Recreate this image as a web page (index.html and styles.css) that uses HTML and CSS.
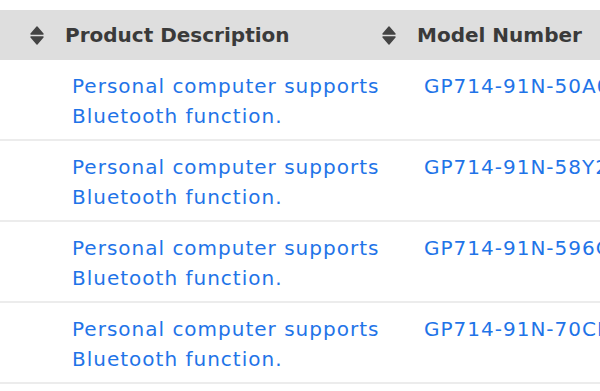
FILE: index.html
```html
<!DOCTYPE html>
<html lang="en">
<head>
<meta charset="utf-8">
<title>Products</title>
<link rel="stylesheet" href="styles.css">
</head>
<body>
<div class="table">
  <div class="head">
    <div class="th">
      <svg class="sort" viewBox="0 0 14 19" aria-hidden="true"><path d="M7 1 L13 8 H1 Z M1 11 H13 L7 18 Z"/></svg>
      <span>Product Description</span>
    </div>
    <div class="th">
      <svg class="sort" viewBox="0 0 14 19" aria-hidden="true"><path d="M7 1 L13 8 H1 Z M1 11 H13 L7 18 Z"/></svg>
      <span>Model Number</span>
    </div>
  </div>
  <div class="row">
    <div class="td desc"><a href="#">Personal computer supports Bluetooth function.</a></div>
    <div class="td model"><a href="#">GP714-91N-50A0</a></div>
  </div>
  <div class="row">
    <div class="td desc"><a href="#">Personal computer supports Bluetooth function.</a></div>
    <div class="td model"><a href="#">GP714-91N-58Y2</a></div>
  </div>
  <div class="row">
    <div class="td desc"><a href="#">Personal computer supports Bluetooth function.</a></div>
    <div class="td model"><a href="#">GP714-91N-596Q</a></div>
  </div>
  <div class="row">
    <div class="td desc"><a href="#">Personal computer supports Bluetooth function.</a></div>
    <div class="td model"><a href="#">GP714-91N-70CH</a></div>
  </div>
</div>
</body>
</html>
```
FILE: styles.css
```css
html, body {
  margin: 0;
  padding: 0;
  background: #ffffff;
  overflow: hidden;
}
body {
  font-family: "DejaVu Sans", "Liberation Sans", sans-serif;
  font-size: 20px;
}
.table {
  margin-top: 10px;
  width: 600px;
}
.head {
  display: grid;
  grid-template-columns: 352px 1fr;
  height: 50px;
  background: #dedede;
  color: #3a3a3a;
  font-weight: bold;
  line-height: 50px;
}
.th {
  display: flex;
  align-items: center;
  gap: 21px;
  padding-left: 30px;
  white-space: nowrap;
}
.sort {
  width: 14px;
  height: 19px;
  fill: #444444;
  stroke: #444444;
  stroke-width: 1.4;
  stroke-linejoin: round;
  flex: none;
}
.row {
  display: grid;
  grid-template-columns: 400px 1fr;
  padding: 11px 0 8px;
  border-bottom: 2px solid #ececec;
  line-height: 30px;
  letter-spacing: 1px;
}
.td a {
  color: #1f74e8;
  text-decoration: none;
}
.desc {
  padding-left: 72px;
}
.model {
  padding-left: 24px;
  white-space: nowrap;
}
```
